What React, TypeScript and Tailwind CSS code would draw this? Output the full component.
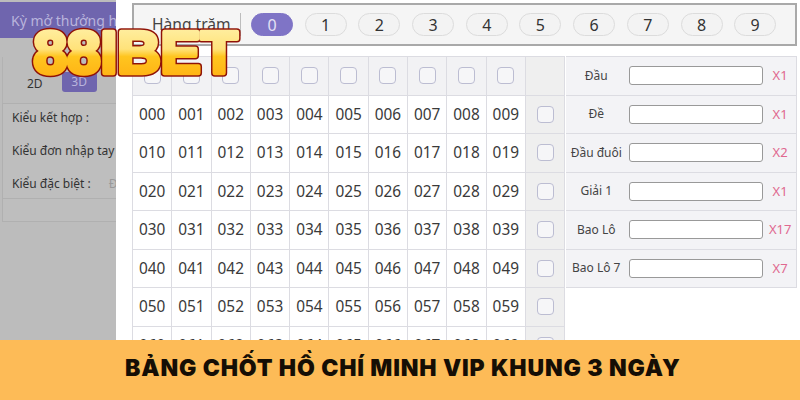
const digits = [0, 1, 2, 3, 4, 5, 6, 7, 8, 9];
const rows = [0, 1, 2, 3, 4, 5, 6];

const bets = [
  { label: 'Đầu', mult: 'X1' },
  { label: 'Đề', mult: 'X1' },
  { label: 'Đầu đuôi', mult: 'X2' },
  { label: 'Giải 1', mult: 'X1' },
  { label: 'Bao Lô', mult: 'X17' },
  { label: 'Bao Lô 7', mult: 'X7' },
];

function Box() {
  return <span className="block h-[17px] w-[17px] rounded-[4px] border border-[#bcbdd2] bg-[#f6f6f8]" />;
}

function Logo() {
  return (
    <svg className="absolute left-[26px] top-[20px]" width="222" height="64" viewBox="0 0 222 64">
      <defs>
        <linearGradient id="gold" x1="0" y1="0" x2="0" y2="1">
          <stop offset="0" stopColor="#fff3b0" />
          <stop offset="0.45" stopColor="#ffe27a" />
          <stop offset="0.56" stopColor="#ffc51f" />
          <stop offset="1" stopColor="#ffab10" />
        </linearGradient>
      </defs>
      <g fontFamily="'Liberation Sans', sans-serif" fontWeight="700" fontSize="60">
        <text x="7.5" y="53" textLength="204" lengthAdjust="spacingAndGlyphs" fill="#8f1207" stroke="#8f1207" strokeWidth="7.5" strokeLinejoin="round">88IBET</text>
        <text x="7.5" y="53" textLength="204" lengthAdjust="spacingAndGlyphs" fill="url(#gold)" stroke="url(#gold)" strokeWidth="4.5" strokeLinejoin="round">88IBET</text>
      </g>
    </svg>
  );
}

export default function App() {
  return (
    <div className="relative flex h-[400px] w-[800px] flex-col overflow-hidden bg-white font-['Noto_Sans',sans-serif]">
      <main className="flex h-[340px] overflow-hidden">
        {/* Dimmed side panel */}
        <aside className="w-[116px] shrink-0 overflow-hidden whitespace-nowrap bg-[#bcbcbc] pt-[2px]">
          <div className="flex h-[36px] items-center bg-[#6f65ae] pl-[11px] text-[14px] text-[#b9b4dc]">Kỳ mở thưởng h</div>
          <div className="ml-[2px] mt-[19px] flex h-[46px] items-start gap-[19px] border-l border-[#b2b2b2] pl-[24px] pt-[15px] text-[12px]">
            <span className="pt-[3px] text-[#333]">2D</span>
            <span className="flex h-[20px] w-[35px] items-center justify-center rounded-[3px] bg-[#6f65ae] text-[#b9b4dc]">3D</span>
          </div>
          <div className="ml-[2px] h-[119px] border border-r-0 border-[#b0b0b0] bg-[#bebebe] text-[12px] text-[#333]">
            <div className="flex h-[95px] flex-col gap-[14px] border-b border-[#b0b0b0] pl-[9px] pt-[4px]">
              <span className="leading-[19px]">Kiểu kết hợp :</span>
              <span className="leading-[19px]">Kiểu đơn nhập tay</span>
              <span className="flex gap-[18px] leading-[19px]">
                Kiểu đặc biệt : <span className="text-[#999]">Đ</span>
              </span>
            </div>
          </div>
        </aside>

        <div className="min-w-0 flex-1 pl-[16px] pr-[3px] pt-[3px]">
          {/* Hundreds picker */}
          <div className="flex h-[43px] items-center border-2 border-[#a9a9a9] bg-[#f5f5f5] pl-[18px]">
            <span className="w-[89px] whitespace-nowrap border-r border-[#bdbdbd] text-[15.6px] leading-[23px] text-[#444]">Hàng trăm</span>
            <div className="ml-[10px] flex gap-[11.7px]">
              {digits.map((d) => (
                <span
                  key={d}
                  className={`flex h-[23px] w-[42px] items-center justify-center rounded-full border text-[16px] ${
                    d === 0 ? 'border-[#7f74c6] bg-[#7f74c6] text-[#e4e1f5]' : 'border-[#dcdcdc] bg-[#f3f3f3] text-[#333]'
                  }`}
                >
                  {d}
                </span>
              ))}
            </div>
          </div>

          <div className="mt-[10px] flex items-start">
            {/* Number table */}
            <div className="grid grid-cols-[repeat(11,39.3px)] auto-rows-[38.5px] border-l border-t border-[#dcdce2]">
              {digits.map((d) => (
                <div key={d} className="flex items-center justify-center border-b border-r border-[#dcdce2] bg-[#f2f2f4]">
                  <Box />
                </div>
              ))}
              <div className="border-b border-r border-[#dcdce2] bg-[#efefef]" />
              {rows.map((r) => (
                <div key={r} className="contents">
                  {digits.map((d) => (
                    <div key={d} className="flex items-center justify-center border-b border-r border-[#dcdce2] text-[15.4px] text-[#3a3a3a]">
                      {`0${r}${d}`}
                    </div>
                  ))}
                  <div className="flex items-center justify-center border-b border-r border-[#dcdce2] bg-[#efefef]">
                    <Box />
                  </div>
                </div>
              ))}
            </div>

            {/* Bet inputs */}
            <div className="ml-px flex-1 border-r border-t border-[#dcdce2]">
              {bets.map((b) => (
                <div key={b.label} className="flex h-[38.5px] items-center border-b border-[#dcdce2] bg-[#f3f3f6] text-[12px]">
                  <span className="w-[63px] pr-[3px] text-center text-[#444]">{b.label}</span>
                  <span className="h-[19px] w-[134px] rounded-[3px] border border-[#999] bg-white" />
                  <span className="flex-1 pl-[1px] text-center text-[13px] text-[#e0688f]">{b.mult}</span>
                </div>
              ))}
            </div>
          </div>
        </div>
      </main>

      {/* Title banner */}
      <div className="flex h-[60px] items-center bg-[#fdbb57] pb-[4px] pl-[125px] font-['Inter',sans-serif] text-[23px] font-black tracking-[0.87px] text-[#150e05]">
        BẢNG CHỐT HỒ CHÍ MINH VIP KHUNG 3 NGÀY
      </div>

      <Logo />
    </div>
  );
}
